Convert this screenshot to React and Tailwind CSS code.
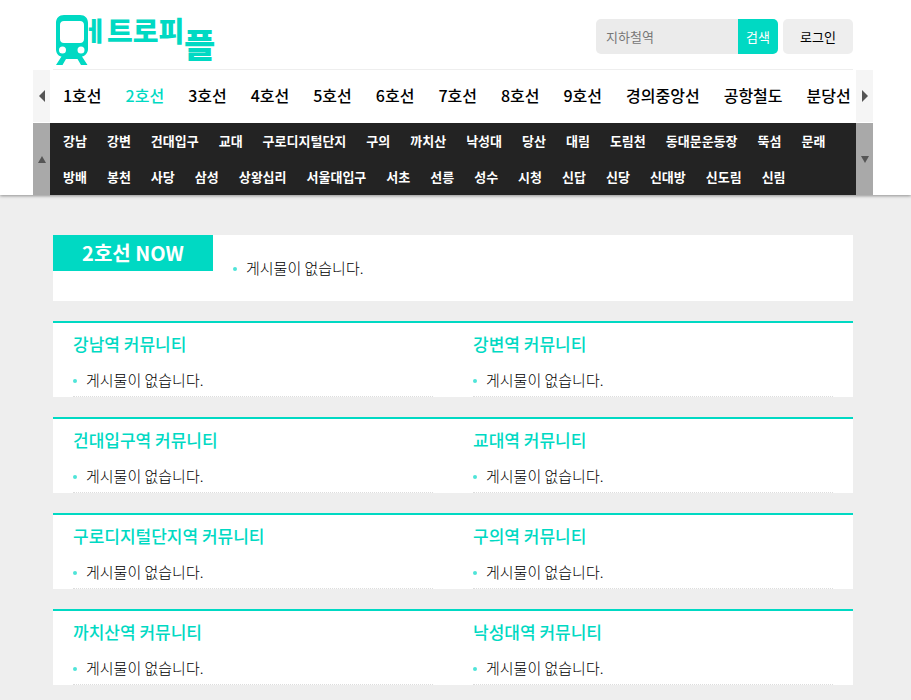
import React from 'react';

const LINES = ['1호선', '2호선', '3호선', '4호선', '5호선', '6호선', '7호선', '8호선', '9호선', '경의중앙선', '공항철도', '분당선'];

const STATIONS = [
    ['강남', '강변', '건대입구', '교대', '구로디지털단지', '구의', '까치산', '낙성대', '당산', '대림', '도림천', '동대문운동장', '뚝섬', '문래'],
    ['방배', '봉천', '사당', '삼성', '상왕십리', '서울대입구', '서초', '선릉', '성수', '시청', '신답', '신당', '신대방', '신도림', '신림'],
];

const BOARDS = [
    ['강남역', '강변역'],
    ['건대입구역', '교대역'],
    ['구로디지털단지역', '구의역'],
    ['까치산역', '낙성대역'],
];

const Logo = () => (
    <svg width="166" height="56" viewBox="0 0 166 56" role="img" aria-label="메트로피플" className="block overflow-visible">
        <g fill="#00d9c3">
            {/* Train */}
            <path
                fillRule="evenodd"
                d="M11 2H27C32 2 35 5 35 10V36C35 40 32 43 29 43.500L34.500 52H28L24.500 46H13L9.500 52H3L8.500 43.500C5 43 3 40 3 36V10C3 5 6 2 11 2ZM11 8C8.500 8 7 9.500 7 12V26C7 28.500 8.500 30 11 30H27C29.500 30 31 28.500 31 26V12C31 9.500 29.500 8 27 8ZM9.500 33.500A3.500 3.500 0 1 0 9.500 40.500A3.500 3.500 0 1 0 9.500 33.500ZM28 33.500A3.500 3.500 0 1 0 28 40.500A3.500 3.500 0 1 0 28 33.500Z"
            />
        </g>
        <g fill="#00d9c3" fontWeight="900">
            <text x="30" y="28" fontSize="26">ㅔ</text>
            <text x="54" y="29" fontSize="28">트로피</text>
            <text x="131" y="45" fontSize="34">플</text>
        </g>
    </svg>
);

const Arrow = ({ points, width, height }) => (
    <svg width={width} height={height} viewBox={`0 0 ${width} ${height}`} aria-hidden="true">
        <polygon points={points} fill="#555" />
    </svg>
);

const Posts = ({ className = '' }) => (
    <ul className={className}>
        <li className="flex items-center gap-[9px] h-[31px] text-[15px] font-light text-black">
            <span className="w-1 h-1 rounded-full bg-[#4fe4d8]"></span>
            게시물이 없습니다.
        </li>
    </ul>
);

const App = () => {
    return (
        <div className="min-h-screen bg-[#eee] text-black font-['Noto_Sans_CJK_KR',sans-serif]">
            <header className="bg-white pr-[5px] shadow-[0_1px_3px_rgba(0,0,0,0.4)]">
                <div className="w-full max-w-[840px] mx-auto">
                    {/* Logo and search */}
                    <div className="mx-5 h-[70px] flex items-center justify-between border-b border-[#eee]">
                        <a href="#home" className="pt-3">
                            <Logo />
                        </a>
                        <div className="flex gap-[5px] h-[35px] mt-1 text-[13px]">
                            <form className="flex" onSubmit={(e) => e.preventDefault()}>
                                <input
                                    type="text"
                                    aria-label="지하철역"
                                    placeholder="지하철역"
                                    className="w-[142px] px-[10px] rounded-l-[5px] bg-[#ebebeb] outline-none placeholder:text-[#777]"
                                />
                                <button type="submit" className="w-10 rounded-r-[5px] bg-[#00d9c3] text-white">검색</button>
                            </form>
                            <a href="#login" className="w-[70px] rounded-[5px] bg-[#eee] flex items-center justify-center">로그인</a>
                        </div>
                    </div>

                    {/* Subway lines */}
                    <nav className="flex h-[53px]">
                        <button aria-label="이전 노선" className="w-[17px] shrink-0 mb-px bg-[#f5f5f5] flex items-center justify-center">
                            <Arrow width={6} height={12} points="6,0 6,12 0,6" />
                        </button>
                        <ul className="flex-1 min-w-0 overflow-hidden flex items-center gap-6 pl-[13px] pb-1 text-[16px] font-medium whitespace-nowrap">
                            {LINES.map((line) => (
                                <li key={line}>
                                    <a href={`#${line}`} className={line === '2호선' ? 'text-[#00d9c3]' : ''}>{line}</a>
                                </li>
                            ))}
                        </ul>
                        <button aria-label="다음 노선" className="w-[17px] shrink-0 mb-px bg-[#f5f5f5] flex items-center justify-center">
                            <Arrow width={6} height={12} points="0,0 6,6 0,12" />
                        </button>
                    </nav>

                    {/* Stations */}
                    <nav className="flex bg-[#232323]">
                        <button aria-label="위로" className="w-[17px] shrink-0 bg-[#a9a9a9] flex items-center justify-center">
                            <Arrow width={8} height={7} points="4,0 8,7 0,7" />
                        </button>
                        <div className="flex-1 min-w-0 overflow-hidden pl-[13px] text-[13px] font-bold text-white whitespace-nowrap">
                            {STATIONS.map((row) => (
                                <ul key={row[0]} className="flex items-center gap-5 h-9">
                                    {row.map((name) => (
                                        <li key={name}><a href={`#${name}`}>{name}</a></li>
                                    ))}
                                </ul>
                            ))}
                        </div>
                        <button aria-label="아래로" className="w-[17px] shrink-0 bg-[#a9a9a9] flex items-center justify-center">
                            <Arrow width={8} height={7} points="0,0 8,0 4,7" />
                        </button>
                    </nav>
                </div>
            </header>

            <main className="pr-[5px] py-10">
                <div className="w-full max-w-[800px] mx-auto flex flex-col gap-5">
                    <section className="flex items-start bg-white">
                        <h1 className="w-40 h-9 flex items-center justify-center bg-[#00d9c3] text-white text-[20px] font-bold">2호선 NOW</h1>
                        <Posts className="flex-1 px-5 pt-[18px] pb-[17px]" />
                    </section>

                    {BOARDS.map((pair) => (
                        <div key={pair[0]} className="grid grid-cols-2 bg-white border-t-2 border-[#00d9c3]">
                            {pair.map((name) => (
                                <section key={name} className="px-5">
                                    <h2 className="h-[42px] flex items-center text-[17px] font-medium text-[#00d9c3]">
                                        <a href={`#${name}`}>{name} 커뮤니티</a>
                                    </h2>
                                    <Posts className="border-b border-dotted border-[#ddd]" />
                                </section>
                            ))}
                        </div>
                    ))}
                </div>
            </main>
        </div>
    );
};

export default App;
